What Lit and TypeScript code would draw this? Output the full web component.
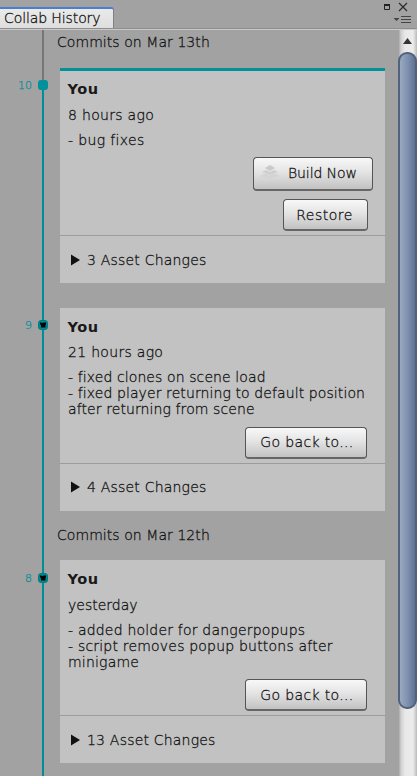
import { LitElement, html, css, svg, nothing } from "lit";
import { customElement, property } from "lit/decorators.js";
import { classMap } from "lit/directives/class-map.js";

interface Commit {
  revision: number;
  age: string;
  message: string[];
  assets: number;
  current?: boolean;
}

const HISTORY: { title: string; commits: Commit[] }[] = [
  {
    title: "Commits on Mar 13th",
    commits: [
      { revision: 10, age: "8 hours ago", message: ["- bug fixes"], assets: 3, current: true },
      {
        revision: 9,
        age: "21 hours ago",
        message: ["- fixed clones on scene load", "- fixed player returning to default position", "after returning from scene"],
        assets: 4,
      },
    ],
  },
  {
    title: "Commits on Mar 12th",
    commits: [
      {
        revision: 8,
        age: "yesterday",
        message: ["- added holder for dangerpopups", "- script removes popup buttons after", "minigame"],
        assets: 13,
      },
    ],
  },
];

@customElement("commit-row")
export class CommitRow extends LitElement {
  @property({ attribute: false }) commit!: Commit;

  static styles = css`
    :host { display: flex; position: relative; }
    .gutter { width: 60px; flex: none; display: flex; align-items: flex-start; padding-top: 12px; box-sizing: border-box; }
    :host(.late) .gutter { padding-top: 13px; }
    .num { width: 32px; text-align: right; font-size: 11px; line-height: 11px; color: #008e96; letter-spacing: 0; -webkit-text-stroke: 0.25px #008e96; }
    .dot { width: 10px; height: 10px; margin-left: 6px; background: #00919a; border-radius: 3px; display: flex; align-items: center; justify-content: center; }
    .dot.past { background: #008991; box-sizing: border-box; border: 1px solid #007d84; }
    .dot svg { display: block; }
    .card { width: 325px; background: #c2c2c2; display: flex; flex-direction: column; height: 203px; }
    .card.current { border-top: 3px solid #00919a; height: 212px; }
    .body { flex: 1; padding: 10px 0 0 8px; }
    .current .body { padding-top: 9px; }
    .name { font-weight: bold; font-size: 14.5px; line-height: 18px; letter-spacing: 0.6px; margin-left: -0.5px; -webkit-text-stroke: 0; color: #191919; }
    .age { line-height: 16px; margin-top: 8px; letter-spacing: 0.3px; }
    .current .age { margin-top: 9px; }
    :host(.late) .age { margin-top: 9px; letter-spacing: 0; }
    .message { margin-top: 9px; letter-spacing: 0.1px; }
    .current .message { letter-spacing: 0.35px; }
    :host(.late) .message { letter-spacing: 0.2px; }
    .line { line-height: 16px; white-space: pre; }
    .actions { display: flex; flex-direction: column; align-items: flex-end; gap: 9px; padding: 0 18px 4px 0; }
    .current .actions { padding-right: 12px; }
    .btn { display: flex; align-items: center; justify-content: center; box-sizing: border-box; width: 122px; height: 32px; padding: 0 0 1px 2px; border: 1px solid #555; border-bottom: 2px solid #666; border-radius: 4px; background: linear-gradient(#f8f8f8, #e4e4e4 45%, #c2c2c2); font: inherit; letter-spacing: 0.35px; color: inherit; white-space: nowrap; -webkit-text-stroke: inherit; }
    :host(.late) .btn { padding-bottom: 0; }
    .btn.build { width: 120px; height: 34px; justify-content: flex-start; padding-left: 8px; letter-spacing: -0.1px; margin-bottom: -1px; }
    .build svg { margin: -3px 7px 0 -2px; padding-right: 1px; }
    .btn.restore { width: 85px; margin-right: 5px; padding: 0 2px 0 0; letter-spacing: 0.5px; }
    .assets { height: 47px; border-top: 1px solid #9c9c9c; display: flex; align-items: center; padding-left: 11px; letter-spacing: 0.2px; }
    :host(.tight) .assets { height: 45px; padding-bottom: 2px; }
    .assets svg { margin-right: 7px; flex: none; }
  `;

  render() {
    const { revision, age, message, assets, current } = this.commit;
    return html`
      <div class="gutter">
        <span class="num">${revision}</span>
        <span class=${classMap({ dot: true, past: !current })}>
          ${current ? nothing : html`<svg width="6" height="6" viewBox="0 0 6 6"><path d="M0 0.5H1L2 1L4 0.5H6V2L5.5 3V5.5H1V3.5L0 2Z" fill="#000" /></svg>`}
        </span>
      </div>
      <div class=${classMap({ card: true, current: !!current })}>
        <div class="body">
          <div class="name">You</div>
          <div class="age">${age}</div>
          <div class="message">${message.map((l) => html`<div class="line">${l}</div>`)}</div>
        </div>
        <div class="actions">
          ${current
            ? html`<button class="btn build">
                  <svg width="20" height="14" viewBox="0 0 20 14">
                    ${svg`<g fill="#d3d4d6"><path d="M0 11L5 8.5L10 10.5L15 8.5L20 11L10 14Z" /><path d="M2 7L6 5L10 7L14 5L18 7L10 10Z" fill="#cdcfd1" /><path d="M5 3L10 0L15 3L10 6Z" fill="#c8cacc" /></g>`}
                  </svg>Build Now</button>
                <button class="btn restore">Restore</button>`
            : html`<button class="btn">Go back to...</button>`}
        </div>
        <div class="assets">
          <svg width="9" height="12" viewBox="0 0 9 12"><path d="M0 0.5L9 6L0 11.5Z" fill="#111" /></svg>
          ${assets} Asset Changes
        </div>
      </div>
    `;
  }
}

@customElement("app-root")
export class AppRoot extends LitElement {
  static styles = css`
    :host { display: flex; flex-direction: column; width: 417px; height: 776px; overflow: hidden; background: #a2a2a2; color: #111; font: 200 14px "DejaVu Sans", sans-serif; -webkit-text-stroke: 0.28px #111; }
    .header { height: 30px; flex: none; display: flex; align-items: flex-end; justify-content: space-between; box-sizing: border-box; border-bottom: 1px solid #c9c9c9; box-shadow: inset 0 -1px #8e8e8e; }
    .tab { box-sizing: border-box; width: 114px; height: 21px; margin-bottom: 1px; padding-left: 4px; line-height: 19px; letter-spacing: -0.1px; border-top: 2px solid #4a7fd0; border-right: 1px solid #808080; border-radius: 0 3px 0 0; background: linear-gradient(#eaeaea, #dedede); white-space: nowrap; }
    .controls { align-self: flex-start; flex: none; }
    .main { flex: 1; display: flex; min-height: 0; }
    .list { flex: 1; position: relative; }
    .track { position: absolute; top: 0; bottom: 0; left: 42px; width: 2px; background: linear-gradient(#777 50px, #008f97 50px); }
    .title { height: 24px; padding-left: 57px; line-height: 24px; letter-spacing: 0.06px; }
    .group .stack { display: flex; flex-direction: column; gap: 25px; }
    .group:first-of-type .title { margin-bottom: 14px; }
    .group + .group .title { margin: 12px 0 13px; }
    .scroll { width: 19px; flex: none; display: flex; flex-direction: column; padding-top: 1px; box-sizing: border-box; background: linear-gradient(90deg, #999, #d0d0d0 3px, #e8e8e8 7px, #ececec 15px, #bbb); }
    .up { height: 19px; padding-bottom: 2px; display: flex; align-items: center; justify-content: center; }
    .thumb { height: 657px; box-sizing: border-box; border: 2px solid #52617c; border-radius: 9px; background: linear-gradient(90deg, #9aa9c2, #7f91ae 50%, #5d7294); }
  `;

  render() {
    return html`
      <div class="header">
        <div class="tab">Collab History</div>
        <svg class="controls" width="34" height="26" viewBox="0 0 34 26">
          <path d="M1.5 5H6.5V9.5H1.5Z" fill="none" stroke="#222" />
          <path d="M1 5H7" stroke="#222" stroke-width="2" />
          <path d="M16 3L24 11M24 3L16 11" stroke="#2b2b2b" stroke-width="1.2" />
          <path d="M10.5 18H16.5L13.5 21Z" fill="#444" />
          <path d="M18 16.5H28M18 19.5H28M18 22.5H28" stroke="#444" />
        </svg>
      </div>
      <div class="main">
        <div class="list">
          <div class="track"></div>
          ${HISTORY.map(
            (g, i) => html`<section class="group">
              <div class="title">${g.title}</div>
              <div class="stack">
                ${g.commits.map(
                  (c, j) => html`<commit-row class=${classMap({ late: i > 0, tight: j > 0 })} .commit=${c}></commit-row>`
                )}
              </div>
            </section>`
          )}
        </div>
        <div class="scroll">
          <div class="up"><svg width="9" height="6" viewBox="0 0 9 6"><path d="M0 6L4.5 0L9 6Z" fill="#333" /></svg></div>
          <div class="thumb"></div>
        </div>
      </div>
    `;
  }
}
